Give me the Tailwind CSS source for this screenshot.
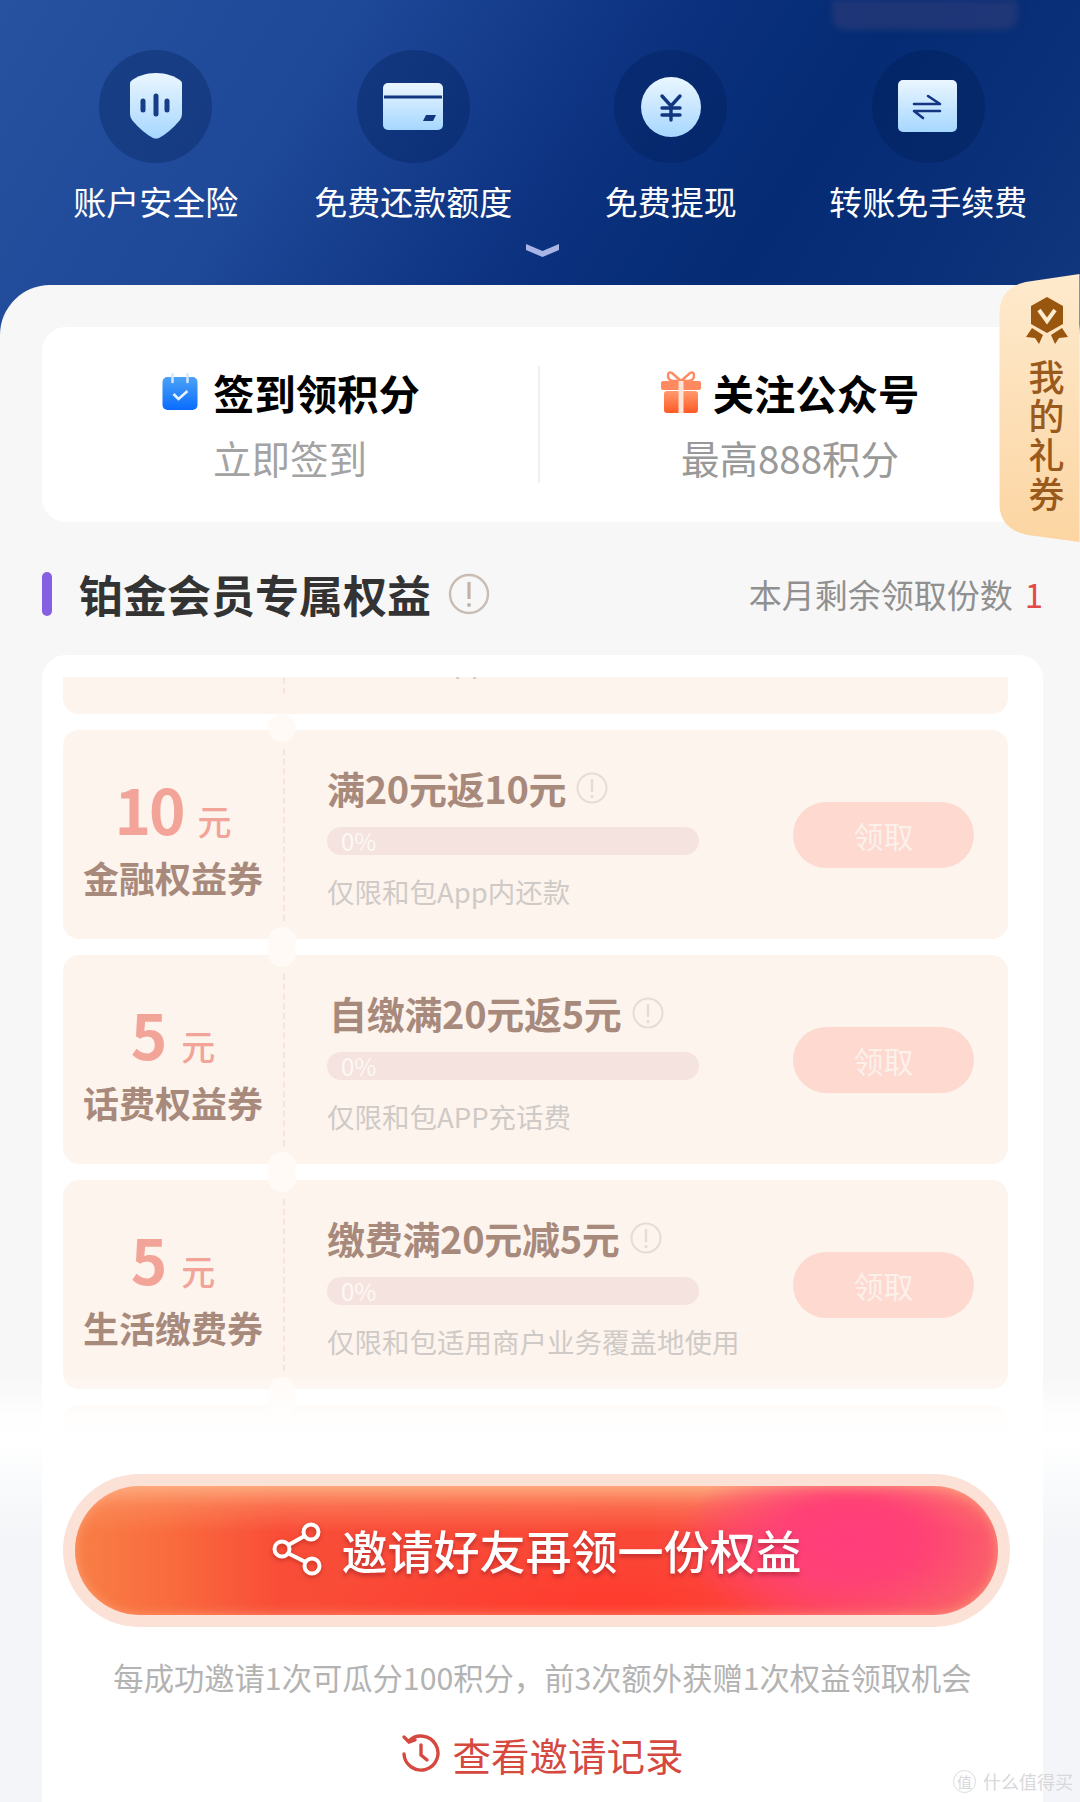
<!DOCTYPE html>
<html lang="zh-CN">
<head>
  <meta charset="UTF-8" />
  <meta name="viewport" content="width=device-width, initial-scale=1.0" />
  <title>铂金会员专属权益</title>
  <script src="https://cdn.jsdelivr.net/npm/@tailwindcss/browser@4"></script>
</head>
<body class="font-['Noto_Sans_CJK_SC','Noto_Sans',sans-serif]">

  <div class="relative w-[1080px] h-[1802px] overflow-hidden bg-[#f7f7f7]">
    <!-- 顶部蓝色权益区 -->
    <div class="absolute inset-x-0 top-0 h-[345px] bg-[linear-gradient(122deg,#26529f_0%,#1e4898_28%,#0c3280_52%,#042b73_70%,#0a3079_85%,#12387f_100%)]"></div>
    <div class="absolute left-[832px] top-0 w-[186px] h-[30px] rounded-b-[14px] bg-[#2a3a78]/70 blur-[3px]"></div>

    <header class="relative h-[285px] pl-[27px] pr-[23px] pt-[50px]">
      <div class="grid grid-cols-4">
        <div class="flex flex-col items-center">
          <div class="w-[113px] h-[113px] rounded-full bg-[#001a4f]/30 flex items-center justify-center">
            <svg width="54" height="66" viewBox="0 0 54 66" class="-mt-[1px]">
              <defs>
                <linearGradient id="ice" x1="0" y1="0" x2="0" y2="1"><stop offset="0" stop-color="#eaf6ff" /><stop offset="1" stop-color="#a6d7ff" /></linearGradient>
              </defs>
              <path d="M27 0C37 0 46 3 52 8Q53 9 53 11V41Q53 44 51 47Q41 59 30 65Q27 66 24 65Q13 59 3 47Q1 44 1 41V11Q1 9 2 8C8 3 17 0 27 0Z" fill="url(#ice)" />
              <g stroke="#163d86" stroke-width="5" stroke-linecap="round"><path d="M14 28V37" /><path d="M27 23V41" /><path d="M38 28V37" /></g>
            </svg>
          </div>
          <div class="mt-[14px] text-[33px] leading-[48px] text-white">账户安全险</div>
        </div>
        <div class="flex flex-col items-center">
          <div class="w-[113px] h-[113px] rounded-full bg-[#001a4f]/30 flex items-center justify-center">
            <svg width="62" height="48" viewBox="0 0 62 48">
              <rect x="1" y="0" width="60" height="47" rx="5" fill="url(#ice)" />
              <path d="M2 14H60" stroke="#123680" stroke-width="3" />
              <path d="M44 32H54L51 38H41Z" fill="#123680" />
            </svg>
          </div>
          <div class="mt-[14px] text-[33px] leading-[48px] text-white">免费还款额度</div>
        </div>
        <div class="flex flex-col items-center">
          <div class="w-[113px] h-[113px] rounded-full bg-[#001a4f]/30 flex items-center justify-center">
            <svg width="62" height="62" viewBox="0 0 62 62">
              <circle cx="31" cy="31" r="30" fill="url(#ice)" />
              <g stroke="#123680" stroke-width="3.4" stroke-linecap="round" fill="none">
                <path d="M22 20L31 30L40 20" /><path d="M22 32H40" /><path d="M22 39H40" /><path d="M31 30V44" />
              </g>
            </svg>
          </div>
          <div class="mt-[14px] text-[33px] leading-[48px] text-white">免费提现</div>
        </div>
        <div class="flex flex-col items-center">
          <div class="w-[113px] h-[113px] rounded-full bg-[#001a4f]/30 flex items-center justify-center">
            <svg width="60" height="54" viewBox="0 0 60 54">
              <rect x="0" y="0" width="59" height="52" rx="5" fill="url(#ice)" />
              <g stroke="#123680" stroke-width="2.6" stroke-linecap="round" stroke-linejoin="round" fill="none">
                <path d="M16 24H42L30 16" /><path d="M42 31H16L25 38" />
              </g>
            </svg>
          </div>
          <div class="mt-[14px] text-[33px] leading-[48px] text-white">转账免手续费</div>
        </div>
      </div>
      <div class="flex justify-center mt-[19px]">
        <svg width="33" height="13" viewBox="0 0 33 13"><path d="M0 0L16.5 7L33 0V6L16.5 13L0 6Z" fill="#a8b5e6" /></svg>
      </div>
    </header>

    <!-- 白色内容区 -->
    <main class="relative h-[1517px] rounded-t-[50px] bg-[#f7f7f7] pt-[42px] pl-[42px] pr-[37px]">
      <!-- 签到 / 关注 -->
      <section class="flex items-center h-[195px] rounded-[24px] bg-white">
        <div class="w-[498px] h-[117px] flex flex-col items-center border-r-2 border-[#f0f0f0]">
          <div class="flex items-center gap-[14px] h-[58px] -mt-[3px] pl-[2px]">
            <svg width="37" height="38" viewBox="0 0 36 38">
              <defs><linearGradient id="cal" x1="0" y1="0" x2="0" y2="1"><stop offset="0" stop-color="#4ba2f5" /><stop offset="1" stop-color="#0a6cff" /></linearGradient></defs>
              <rect x="0" y="4" width="35" height="33" rx="5" fill="url(#cal)" />
              <path d="M10 1V9M25 1V9" stroke="#d5e8fb" stroke-width="2.5" stroke-linecap="round" />
              <path d="M11 21L16 26L25 18" stroke="#e8f3ff" stroke-width="2.6" fill="none" />
            </svg>
            <span class="text-[41.3px] leading-[58px] font-bold text-black">签到领积分</span>
          </div>
          <div class="mt-[10px] text-[38.5px] leading-[52px] text-[#a3a3a3]">立即签到</div>
        </div>
        <div class="w-[500px] h-[117px] flex flex-col items-center">
          <div class="flex items-center gap-[12px] h-[58px] -mt-[3px]">
            <svg width="40" height="43" viewBox="0 0 40 43">
              <defs><linearGradient id="gift" x1="0" y1="0" x2="0" y2="1"><stop offset="0" stop-color="#ff9a6e" /><stop offset="1" stop-color="#ff5a26" /></linearGradient></defs>
              <rect x="0" y="10" width="40" height="9" rx="2" fill="#ff8a60" />
              <rect x="3" y="20" width="34" height="22" rx="3" fill="url(#gift)" />
              <path d="M20 10L11 2Q7 0 7 5Q7 9 12 10ZM20 10L29 2Q33 0 33 5Q33 9 28 10Z" fill="none" stroke="#ff8a60" stroke-width="2.4" />
              <path d="M17.5 10H22.5V42H17.5Z" fill="#ffe3d6" />
            </svg>
            <span class="text-[41.3px] leading-[58px] font-bold text-black">关注公众号</span>
          </div>
          <div class="mt-[10px] text-[38.5px] leading-[52px] text-[#999999]">最高888积分</div>
        </div>
      </section>

      <!-- 标题 -->
      <section class="flex items-center justify-between h-[133px] pt-[10px]">
        <div class="flex items-center">
          <div class="w-[10px] h-[44px] rounded-[5px] bg-[#8560e0]"></div>
          <h2 class="ml-[27px] text-[44px] leading-[60px] font-bold text-[#333333]">铂金会员专属权益</h2>
          <svg width="42" height="42" viewBox="0 0 42 42" class="ml-[17px]">
            <circle cx="21" cy="21" r="19" fill="none" stroke="#c9bcb3" stroke-width="2.4" />
            <path d="M21 9V26" stroke="#c0b2a8" stroke-width="3.2" /><circle cx="21" cy="32" r="2" fill="#c0b2a8" />
          </svg>
        </div>
        <div class="text-[33px] leading-[46px] text-[#909090]">本月剩余领取份数<span class="ml-[12px] text-[#e24a4a]">1</span></div>
      </section>

      <!-- 权益卡片 -->
      <section class="rounded-t-[24px] bg-white h-[1148px] pt-[22px]">
        <div class="h-[755px] overflow-hidden px-[21px] w-[966px]">
          <div class="-mt-[172px] flex flex-col gap-[16px] w-[945px]">

            <article class="relative h-[209px] rounded-[16px] bg-[#fdf4ee] overflow-hidden flex">
              <div class="w-[222px] border-r-2 border-dashed border-[#f8e3d8] my-[20px]"></div>
              <div class="pl-[42px] pt-[137px] text-[27.5px] leading-[38px] text-[#cfcac6]">仅限和包App内还款</div>
            </article>

            <article class="relative h-[209px] rounded-[16px] bg-[#fdf4ee] flex items-center">
              <div class="absolute left-[205px] -top-[16px] w-[28px] h-[28px] rounded-full bg-[#fffaf6]"></div>
              <div class="absolute left-[205px] -bottom-[16px] w-[28px] h-[28px] rounded-full bg-[#fffaf6]"></div>
              <div class="w-[222px] h-[172px] pt-[2px] flex flex-col items-center justify-center border-r-2 border-dashed border-[#f8e3d8]">
                <div class="flex items-baseline gap-[14px] h-[76px]"><span class="text-[62px] leading-[76px] font-semibold text-[#f2a499] tracking-[-2px]">10</span><span class="text-[34px] font-medium text-[#f2a499]">元</span></div>
                <div class="mt-[6px] text-[36px] leading-[50px] font-bold text-[#a88a7c]">金融权益券</div>
              </div>
              <div class="ml-[42px] w-[372px]">
                <div class="flex items-center h-[56px]">
                  <span class="text-[38px] leading-[56px] font-bold text-[#a88a7c] tracking-[-0.3px]">满20元返10元</span>
                  <svg width="32" height="32" viewBox="0 0 32 32" class="ml-[10px]"><circle cx="16" cy="16" r="14.5" fill="none" stroke="#e6dcd5" stroke-width="2" /><path d="M16 7V20" stroke="#e6dcd5" stroke-width="2.4" /><circle cx="16" cy="24.5" r="1.6" fill="#e6dcd5" /></svg>
                </div>
                <div class="mt-[11px] h-[28px] rounded-full bg-[#f5e3df] pl-[14px] text-[24px] leading-[27px] text-[#fdf8f5]">0%</div>
                <div class="mt-[17px] text-[27.5px] leading-[38px] text-[#cfcac6] whitespace-nowrap">仅限和包App内还款</div>
              </div>
              <div class="ml-[94px] w-[181px] h-[66px] rounded-full bg-[#fdd9d0] text-center text-[30px] leading-[66px] text-[#fcf0ea]">领取</div>
            </article>

            <article class="relative h-[209px] rounded-[16px] bg-[#fdf4ee] flex items-center">
              <div class="absolute left-[205px] -top-[16px] w-[28px] h-[28px] rounded-full bg-[#fffaf6]"></div>
              <div class="absolute left-[205px] -bottom-[16px] w-[28px] h-[28px] rounded-full bg-[#fffaf6]"></div>
              <div class="w-[222px] h-[172px] pt-[2px] flex flex-col items-center justify-center border-r-2 border-dashed border-[#f8e3d8]">
                <div class="flex items-baseline gap-[14px] h-[76px]"><span class="text-[62px] leading-[76px] font-semibold text-[#f2a499]">5</span><span class="text-[34px] font-medium text-[#f2a499]">元</span></div>
                <div class="mt-[6px] text-[36px] leading-[50px] font-bold text-[#a88a7c]">话费权益券</div>
              </div>
              <div class="ml-[42px] w-[372px]">
                <div class="flex items-center h-[56px] pl-[2px]">
                  <span class="text-[38px] leading-[56px] font-bold text-[#a88a7c] tracking-[-0.3px] whitespace-nowrap">自缴满20元返5元</span>
                  <svg width="32" height="32" viewBox="0 0 32 32" class="ml-[10px] shrink-0"><circle cx="16" cy="16" r="14.5" fill="none" stroke="#e6dcd5" stroke-width="2" /><path d="M16 7V20" stroke="#e6dcd5" stroke-width="2.4" /><circle cx="16" cy="24.5" r="1.6" fill="#e6dcd5" /></svg>
                </div>
                <div class="mt-[11px] h-[28px] rounded-full bg-[#f5e3df] pl-[14px] text-[24px] leading-[27px] text-[#fdf8f5]">0%</div>
                <div class="mt-[17px] text-[27.5px] leading-[38px] text-[#cfcac6] whitespace-nowrap">仅限和包APP充话费</div>
              </div>
              <div class="ml-[94px] w-[181px] h-[66px] rounded-full bg-[#fdd9d0] text-center text-[30px] leading-[66px] text-[#fcf0ea]">领取</div>
            </article>

            <article class="relative h-[209px] rounded-[16px] bg-[#fdf4ee] flex items-center">
              <div class="absolute left-[205px] -top-[16px] w-[28px] h-[28px] rounded-full bg-[#fffaf6]"></div>
              <div class="absolute left-[205px] -bottom-[16px] w-[28px] h-[28px] rounded-full bg-[#fffaf6]"></div>
              <div class="w-[222px] h-[172px] pt-[2px] flex flex-col items-center justify-center border-r-2 border-dashed border-[#f8e3d8]">
                <div class="flex items-baseline gap-[14px] h-[76px]"><span class="text-[62px] leading-[76px] font-semibold text-[#f2a499]">5</span><span class="text-[34px] font-medium text-[#f2a499]">元</span></div>
                <div class="mt-[6px] text-[36px] leading-[50px] font-bold text-[#a88a7c]">生活缴费券</div>
              </div>
              <div class="ml-[42px] w-[372px]">
                <div class="flex items-center h-[56px]">
                  <span class="text-[38px] leading-[56px] font-bold text-[#a88a7c] tracking-[-0.3px] whitespace-nowrap">缴费满20元减5元</span>
                  <svg width="32" height="32" viewBox="0 0 32 32" class="ml-[10px] shrink-0"><circle cx="16" cy="16" r="14.5" fill="none" stroke="#e6dcd5" stroke-width="2" /><path d="M16 7V20" stroke="#e6dcd5" stroke-width="2.4" /><circle cx="16" cy="24.5" r="1.6" fill="#e6dcd5" /></svg>
                </div>
                <div class="mt-[11px] h-[28px] rounded-full bg-[#f5e3df] pl-[14px] text-[24px] leading-[27px] text-[#fdf8f5]">0%</div>
                <div class="mt-[17px] text-[27.5px] leading-[38px] text-[#cfcac6] whitespace-nowrap">仅限和包适用商户业务覆盖地使用</div>
              </div>
              <div class="ml-[94px] w-[181px] h-[66px] rounded-full bg-[#fdd9d0] text-center text-[30px] leading-[66px] text-[#fcf0ea]">领取</div>
            </article>

            <article class="relative h-[209px] rounded-[16px] bg-[#fdf4ee]">
              <div class="absolute left-[205px] -top-[16px] w-[28px] h-[28px] rounded-full bg-[#fffaf6]"></div>
            </article>
          </div>
        </div>
      </section>
    </main>

    <!-- 卡片列表底部渐隐，两侧留白处再回到浅灰 -->
    <div class="absolute inset-x-0 top-[1375px] bottom-0 bg-[linear-gradient(to_bottom,rgba(255,255,255,0)_0px,rgba(255,255,255,0.85)_40px,#ffffff_65px,#fafbfc_100px,#f3f5f8_170px)]"></div>

    <!-- 底部邀请区 -->
    <div class="absolute left-[42px] right-[37px] top-[1440px] bottom-0 bg-white pt-[34px]">
      <div class="ml-[21px] w-[947px] h-[153px] rounded-full bg-[#fbe1d6] p-[12px]">
        <div class="w-full h-full rounded-full flex items-center justify-center bg-[radial-gradient(ellipse_170px_95px_at_84%_42%,#ff3d7c_0%,#ff4176_40%,rgba(255,66,114,0)_100%),radial-gradient(ellipse_300px_60px_at_58%_92%,#ff3b2e_0%,rgba(255,59,46,0)_100%),linear-gradient(to_bottom,rgba(253,170,125,0.95)_0%,rgba(253,150,105,0.45)_16%,rgba(253,130,90,0)_36%),linear-gradient(to_right,#f87f46_0%,#f96c3e_10%,#f94d38_22%,#fa4836_62%,#fb5060_80%,#f96a68_100%)] shadow-[inset_0_0_12px_rgba(255,170,130,0.7)]">
          <svg width="50" height="54" viewBox="0 0 50 54" class="mr-[20px] -mt-[4px] drop-shadow-[0_2px_2px_rgba(150,30,20,0.5)]">
            <g fill="none" stroke="#ffffff" stroke-width="4">
              <circle cx="10" cy="27" r="7.5" /><circle cx="39" cy="10" r="7.5" /><circle cx="40" cy="44" r="7.5" />
              <path d="M16.5 23L32.5 14M16.5 31.5L33.5 40" />
            </g>
          </svg>
          <span class="-mt-[4px] text-[46px] leading-[60px] font-medium text-white drop-shadow-[0_3px_2px_rgba(150,30,40,0.6)]">邀请好友再领一份权益</span>
        </div>
      </div>
      <p class="mt-[28px] text-center text-[30.3px] leading-[44px] text-[#b3b3b3] whitespace-nowrap">每成功邀请1次可瓜分100积分，前3次额外获赠1次权益领取机会</p>
      <div class="mt-[29px] flex items-center justify-center">
        <svg width="40" height="40" viewBox="0 0 40 40" class="mr-[11px]">
          <g fill="none" stroke="#d5493f" stroke-width="3.4" stroke-linecap="round">
            <path d="M8 7A17 17 0 1 1 3 20" /><path d="M3 3L8 8L14 6" /><path d="M20 11V21L26 26" />
          </g>
        </svg>
        <span class="text-[38.5px] leading-[52px] text-[#d5493f]">查看邀请记录</span>
      </div>
    </div>

    <!-- 我的礼券 侧边浮层 -->
    <aside class="absolute right-0 top-[274px] w-[81px] h-[268px]">
      <svg width="81" height="268" viewBox="0 0 80 268" class="absolute inset-0">
        <defs><linearGradient id="tab" x1="0" y1="0" x2="0" y2="1"><stop offset="0" stop-color="#feeacd" /><stop offset="1" stop-color="#fcd5a2" /></linearGradient></defs>
        <path d="M80 0V268L28 261Q0 255 0 230V40Q0 14 26 8Z" fill="url(#tab)" />
      </svg>
      <div class="relative flex flex-col items-center pl-[14px] pt-[23px]">
        <svg width="42" height="48" viewBox="0 0 42 48">
          <path d="M21 0L37 9V27L21 36L5 27V9Z" fill="#98560f" />
          <path d="M13 13L21 24L29 13" stroke="#fdeccf" stroke-width="4" fill="none" />
          <path d="M6 31L0 40L9 41L13 47L17 38ZM36 31L42 40L33 41L29 47L25 38Z" fill="#98560f" />
        </svg>
        <div class="mt-[11px] w-[36px] text-[36px] leading-[39px] font-medium text-[#9a5a1c] break-all">我的礼券</div>
      </div>
    </aside>

    <!-- 水印 -->
    <div class="absolute left-[953px] top-[1768px] flex items-center gap-[7px] text-[#d8d8da]">
      <div class="w-[23px] h-[23px] rounded-full border border-[#dcdcde] text-center text-[15px] leading-[21px]">值</div>
      <span class="text-[18px] leading-[26px]">什么值得买</span>
    </div>
  </div>

</body>
</html>
